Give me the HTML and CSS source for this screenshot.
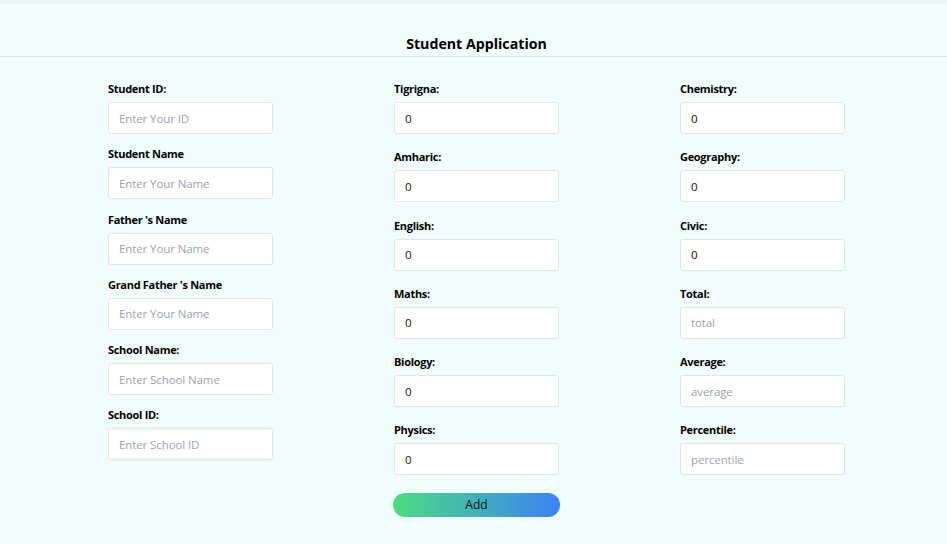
FILE: index.html
```html
<!DOCTYPE html>
<html>
<head>
<meta charset="utf-8">
<link rel="stylesheet" href="styles.css">
</head>
<body>
<div class="topbar"></div>
<header class="header"><h1 class="title">Student Application</h1></header>
<form class="form">
  <div class="col col-left">
    <div class="field"><label class="label">Student ID:</label><input class="input" placeholder="Enter Your ID"></div>
    <div class="field"><label class="label">Student Name</label><input class="input" placeholder="Enter Your Name"></div>
    <div class="field"><label class="label">Father 's Name</label><input class="input" placeholder="Enter Your Name"></div>
    <div class="field"><label class="label">Grand Father 's Name</label><input class="input" placeholder="Enter Your Name"></div>
    <div class="field"><label class="label">School Name:</label><input class="input" placeholder="Enter School Name"></div>
    <div class="field"><label class="label">School ID:</label><input class="input" placeholder="Enter School ID"></div>
  </div>
  <div class="col col-mid">
    <div class="field"><label class="label">Tigrigna:</label><input class="input" value="0"></div>
    <div class="field"><label class="label">Amharic:</label><input class="input" value="0"></div>
    <div class="field"><label class="label">English:</label><input class="input" value="0"></div>
    <div class="field"><label class="label">Maths:</label><input class="input" value="0"></div>
    <div class="field"><label class="label">Biology:</label><input class="input" value="0"></div>
    <div class="field"><label class="label">Physics:</label><input class="input" value="0"></div>
    <button type="button" class="btn">Add</button>
  </div>
  <div class="col col-right">
    <div class="field"><label class="label">Chemistry:</label><input class="input" value="0"></div>
    <div class="field"><label class="label">Geography:</label><input class="input" value="0"></div>
    <div class="field"><label class="label">Civic:</label><input class="input" value="0"></div>
    <div class="field"><label class="label">Total:</label><input class="input" placeholder="total"></div>
    <div class="field"><label class="label">Average:</label><input class="input" placeholder="average"></div>
    <div class="field"><label class="label">Percentile:</label><input class="input" placeholder="percentile"></div>
  </div>
</form>
</body>
</html>
```
FILE: styles.css
```css
* { box-sizing: border-box; }
html, body { margin: 0; height: 100%; }
body {
  background: #f0fdfa;
  font-family: "Open Sans", "Noto Sans", sans-serif;
  color: #000;
  overflow: hidden;
}
.topbar {
  height: 2px;
  background: #eef6f5;
  box-shadow: 0 1px 3px rgba(0,0,0,0.08);
}
.header {
  border-bottom: 1px solid #e3e7ea;
  padding-top: 32px;
  height: 55px;
}
.title {
  margin: 0;
  padding-left: 6px;
  text-align: center;
  font-size: 14.2px;
  font-weight: 700;
  line-height: 20px;
  letter-spacing: 0;
}
.form {
  display: grid;
  grid-template-columns: 165px 165px 165px;
  column-gap: 121px;
  padding: 24px 0 0 108px;
}
.col { display: flex; flex-direction: column; }
.col-left { gap: 12.25px; }
.col-mid, .col-right { gap: 15.25px; }
.field { display: flex; flex-direction: column; gap: 6px; }
.label {
  font-size: 11px;
  font-weight: 700;
  line-height: 15px;
  letter-spacing: -0.3px;
}
.input {
  width: 165px;
  height: 32px;
  border: 1px solid #e2e6ea;
  border-radius: 3px;
  background: #fff;
  padding: 0 10px;
  font-family: "Open Sans", "Noto Sans", sans-serif;
  font-size: 11.5px;
  letter-spacing: -0.1px;
  color: #111;
  outline: none;
}
.input::placeholder { color: #9ca3af; }
.btn {
  margin-top: 2px;
  margin-left: -1px;
  width: 167px;
  height: 24px;
  border: none;
  border-radius: 12px;
  background: linear-gradient(to right, #4ade80, #3b82f6);
  font-family: "Open Sans", "Noto Sans", sans-serif;
  font-size: 12px;
  color: #111;
}
```
